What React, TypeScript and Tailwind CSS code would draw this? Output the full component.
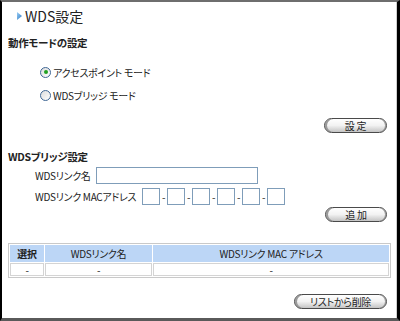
import React from 'react';

const PillButton: React.FC<{ label: string; width: string }> = ({ label, width }) => (
  <button
    type="button"
    className={`${width} h-[15px] rounded-full border border-[#4a4a4a] bg-linear-to-b from-white via-[#f2f2f2] to-[#c4c4c4] shadow-[inset_2px_0_0_#9a9a9a,inset_-1px_0_0_#9a9a9a] text-[10px] leading-none text-[#222] flex items-center justify-center whitespace-nowrap`}
  >
    {label}
  </button>
);

const Radio: React.FC<{ checked?: boolean; label: string }> = ({ checked, label }) => (
  <label className="flex items-center h-[20px] pl-[38px]">
    <span className="w-[11px] h-[11px] shrink-0 rounded-full border border-[#3f6795] bg-linear-to-br from-[#dcdcdc] to-white flex items-center justify-center mr-[2px]">
      {checked && <span className="w-[4px] h-[4px] rounded-full bg-[#21a121]" />}
    </span>
    <span className="whitespace-nowrap">{label}</span>
  </label>
);

const MacBox: React.FC = () => (
  <span className="w-[18px] h-[17px] shrink-0 border border-[#7f9db9] bg-white" />
);

const Dash: React.FC = () => (
  <span className="w-[7px] shrink-0 text-center leading-none">-</span>
);

export default function App() {
  return (
    <div className="w-[400px] h-[321px] bg-white border-t-2 border-t-[#6e6e6e] border-l-2 border-l-black border-r-[3px] border-r-black border-b-[3px] border-b-[#5a5a5a] font-['Noto_Sans_CJK_JP',sans-serif] [font-feature-settings:'palt'] text-[10px] tracking-[-0.3px] text-[#222] overflow-hidden">
      <div className="h-full border-r border-r-[#cfcfcf] flex flex-col">
        <div className="h-[28px] flex items-center pl-[15px]">
          <svg width="5" height="8" viewBox="0 0 5 8">
            <defs>
              <linearGradient id="tri" x1="0" y1="0" x2="1" y2="1">
                <stop offset="0" stopColor="#9fd0f5" />
                <stop offset="1" stopColor="#2a78c4" />
              </linearGradient>
            </defs>
            <polygon points="0,0 5,4 0,8" fill="url(#tri)" />
          </svg>
          <span className="ml-[3px] text-[14px] leading-none tracking-normal">WDS設定</span>
        </div>

        <div className="h-[26px] flex items-center pl-[6px] font-bold text-[10.5px]">動作モードの設定</div>

        <div className="mt-[6px]">
          <Radio checked label="アクセスポイント モード" />
        </div>
        <div className="mt-[3px]">
          <Radio label="WDSブリッジ モード" />
        </div>

        <div className="mt-[13px] flex justify-end pr-[9px]">
          <PillButton label="設 定" width="w-[63px]" />
        </div>

        <div className="mt-[15px] h-[18px] flex items-center pl-[6px] font-bold text-[10.5px]">WDSブリッジ設定</div>

        <div className="mt-[1px] h-[17px] flex items-center pl-[33px]">
          <span className="w-[61px] shrink-0 whitespace-nowrap">WDSリンク名</span>
          <span className="w-[162px] h-[17px] shrink-0 border border-[#7f9db9] bg-white" />
        </div>

        <div className="mt-[4px] h-[17px] flex items-center pl-[33px]">
          <span className="w-[107px] shrink-0 whitespace-nowrap">WDSリンク MACアドレス</span>
          <MacBox />
          <Dash />
          <MacBox />
          <Dash />
          <MacBox />
          <Dash />
          <MacBox />
          <Dash />
          <MacBox />
          <Dash />
          <MacBox />
        </div>

        <div className="mt-[2px] flex justify-end pr-[9px]">
          <PillButton label="追 加" width="w-[62px]" />
        </div>

        <div className="mt-[21px] pl-[6px] pr-[5px]">
          <table className="w-full border-separate border-spacing-[1px] border border-[#c9c9c9] text-center">
            <thead>
              <tr className="h-[17px]">
                <th className="w-[34px] bg-[#bcd6f6] font-bold p-0">選択</th>
                <th className="w-[107px] bg-[#bcd6f6] font-normal p-0">WDSリンク名</th>
                <th className="bg-[#bcd6f6] font-normal p-0">WDSリンク MAC アドレス</th>
              </tr>
            </thead>
            <tbody>
              <tr className="h-[13px]">
                <td className="border border-[#d4d4d4] p-0 leading-none">-</td>
                <td className="border border-[#d4d4d4] p-0 leading-none">-</td>
                <td className="border border-[#d4d4d4] p-0 leading-none">-</td>
              </tr>
            </tbody>
          </table>
        </div>

        <div className="mt-[16px] flex justify-end pr-[9px]">
          <PillButton label="リストから削除" width="w-[93px]" />
        </div>
      </div>
    </div>
  );
}
